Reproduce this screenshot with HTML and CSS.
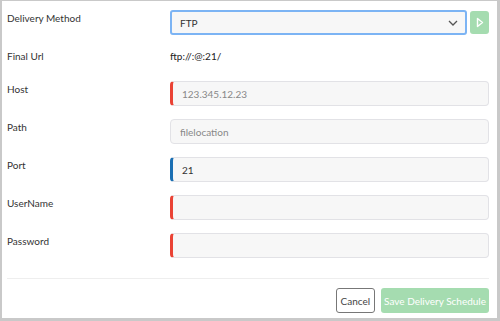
FILE: index.html
```html
<!DOCTYPE html>
<html>
<head>
  <title>Delivery Schedule</title>
  <link rel="stylesheet" href="styles.css">
</head>
<body>
  <div class="panel">
    <div class="form">
      <div class="row">
        <label class="label">Delivery Method</label>
        <div class="field-group">
          <div class="select">
            <span>FTP</span>
            <svg class="chevron" width="10" height="6" viewBox="0 0 10 6"><path d="M1 1l4 4 4-4" fill="none" stroke="#555" stroke-width="1.3"/></svg>
          </div>
          <button class="run-button" type="button">
            <svg width="8" height="11" viewBox="0 0 8 11"><path d="M1.5 1.5v8l5-4z" fill="none" stroke="#fff" stroke-width="1.4" stroke-linejoin="round"/></svg>
          </button>
        </div>
      </div>
      <div class="row row-short">
        <label class="label">Final Url</label>
        <div class="value">ftp://:@:21/</div>
      </div>
      <div class="row">
        <label class="label">Host</label>
        <div class="input required">123.345.12.23</div>
      </div>
      <div class="row">
        <label class="label">Path</label>
        <div class="input">filelocation</div>
      </div>
      <div class="row">
        <label class="label">Port</label>
        <div class="input valid filled">21</div>
      </div>
      <div class="row">
        <label class="label">UserName</label>
        <div class="input required"></div>
      </div>
      <div class="row">
        <label class="label">Password</label>
        <div class="input required"></div>
      </div>
    </div>
    <div class="footer">
      <button class="cancel-button" type="button">Cancel</button>
      <button class="save-button" type="button">Save Delivery Schedule</button>
    </div>
  </div>
</body>
</html>
```

FILE: styles.css
```css
* {
  box-sizing: border-box;
  font-family: Lato, sans-serif;
}
body {
  margin: 0;
  background: #c9c9c9;
}
.panel {
  width: 500px;
  height: 321px;
  background: #fff;
  border-style: solid;
  border-color: #c9c9c9;
  border-width: 1px 3px 3px 2px;
  padding: 9px 8px 0 5px;
}
.form {
  display: flex;
  flex-direction: column;
  gap: 13px;
}
.row {
  display: flex;
  align-items: flex-start;
  height: 25px;
}
.row-short {
  height: 20px;
}
.label {
  width: 163px;
  flex: none;
  font-size: 10px;
  color: #333;
  padding-top: 2px;
}
.value {
  font-size: 10px;
  color: #222;
  padding-top: 2px;
}
.field-group {
  flex: 1;
  display: flex;
  gap: 3px;
  align-items: center;
}
.select {
  flex: 1;
  height: 25px;
  border: 2px solid #7cb4f4;
  border-radius: 3px;
  background: #f7f7f7;
  display: flex;
  align-items: center;
  justify-content: space-between;
  padding: 0 7px 0 8px;
  font-size: 10px;
  color: #333;
}
.run-button {
  width: 19px;
  height: 23px;
  border: none;
  border-radius: 3px;
  background: #a5dcb0;
  display: flex;
  align-items: center;
  justify-content: center;
  padding: 0;
}
.input {
  flex: 1;
  height: 25px;
  border: 1px solid #e2e2e6;
  border-radius: 4px;
  background: #f7f7f7;
  display: flex;
  align-items: center;
  padding-left: 9px;
  font-size: 10px;
  color: #888;
}
.input.required {
  border-left: 3px solid #ea4335;
}
.input.valid {
  border-left: 3px solid #1b6fb3;
}
.input.filled {
  color: #333;
}
.footer {
  margin-top: 20px;
  border-top: 1px solid #eee;
  padding-top: 9px;
  display: flex;
  justify-content: flex-end;
  gap: 6px;
}
.cancel-button {
  height: 25px;
  padding: 0 4px;
  border: 1px solid #777;
  border-radius: 3px;
  background: #fff;
  color: #444;
  font-size: 10px;
}
.save-button {
  height: 25px;
  padding: 0 3px;
  border: none;
  border-radius: 3px;
  background: #a5dcb0;
  color: #fff;
  font-size: 10px;
}
```
